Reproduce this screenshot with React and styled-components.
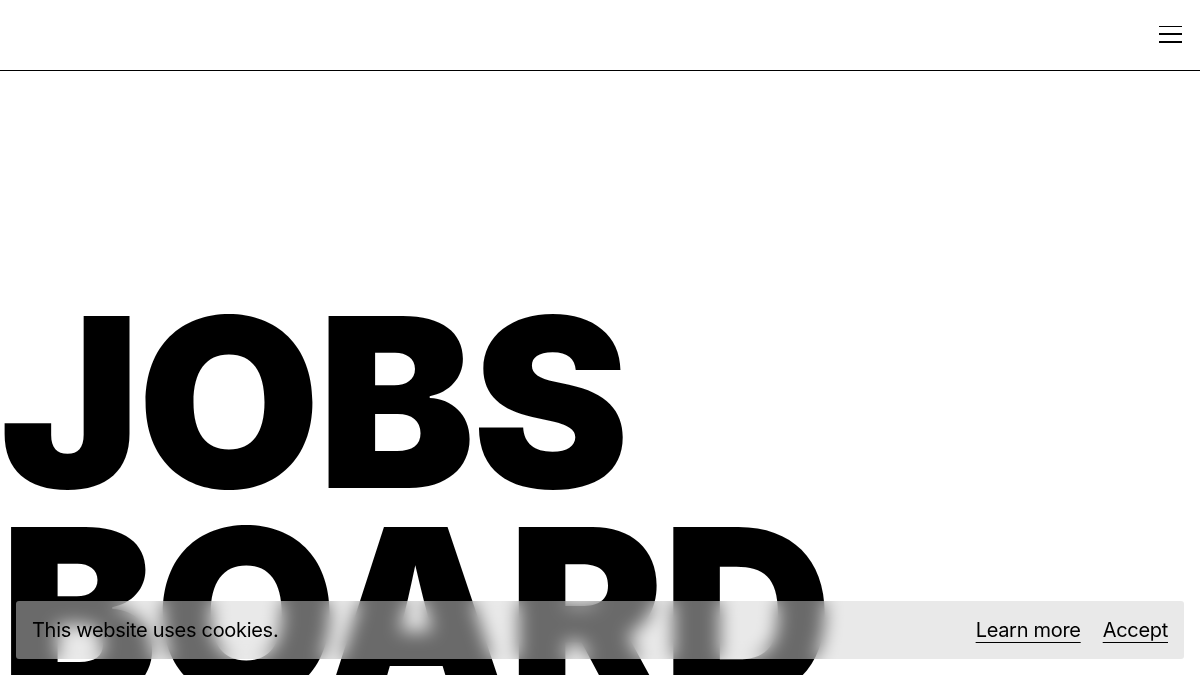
import React from "react";
import styled, { createGlobalStyle } from "styled-components";

const Global = createGlobalStyle`
  html, body { margin: 0; padding: 0; background: #fff; }
  body { font-family: Inter, "Liberation Sans", Arial, sans-serif; color: #000; overflow: hidden; }
  * { box-sizing: border-box; }
`;

const Page = styled.div`
  min-height: 675px;
  display: flex;
  flex-direction: column;
`;

const Header = styled.header`
  height: 71px;
  border-bottom: 1px solid #000;
  display: flex;
  align-items: center;
  justify-content: flex-end;
  padding: 0 18px 0 0;
`;

const MenuButton = styled.button`
  width: 23px;
  height: 17px;
  padding: 0;
  border: 0;
  background: transparent;
  display: flex;
  flex-direction: column;
  justify-content: space-between;
  cursor: pointer;
  margin-top: -2px;
`;

const MenuLine = styled.span`
  display: block;
  height: 1.5px;
  width: 100%;
  background: #000;
`;

const Hero = styled.main`
  padding-top: 226px;
`;

const Title = styled.h1`
  margin: 0;
  font-family: Inter, "Liberation Sans", Arial, sans-serif;
  font-weight: 900;
  font-size: 236px;
  line-height: 211px;
  letter-spacing: -3px;
  text-transform: uppercase;
`;

const Line = styled.span`
  display: block;
  white-space: nowrap;
`;

const CookieBar = styled.div`
  position: fixed;
  left: 16px;
  right: 16px;
  bottom: 16px;
  height: 58px;
  border-radius: 3px;
  background: rgba(212, 212, 212, 0.5);
  backdrop-filter: blur(9px);
  -webkit-backdrop-filter: blur(9px);
  display: flex;
  align-items: center;
  justify-content: space-between;
  padding: 0 16px;
  font-size: 20px;
  letter-spacing: -0.3px;
`;

const CookieText = styled.p`
  margin: 0;
  font-size: 20px;
`;

const Actions = styled.div`
  display: flex;
  gap: 22px;
`;

const TextLink = styled.a`
  color: #000;
  text-decoration: underline;
  text-underline-offset: 5px;
  text-decoration-thickness: 1px;
  cursor: pointer;
`;

export default function App() {
  return (
    <Page>
      <Global />
      <Header>
        <MenuButton aria-label="Menu">
          <MenuLine />
          <MenuLine />
          <MenuLine />
        </MenuButton>
      </Header>
      <Hero>
        <Title>
          <Line>Jobs</Line>
          <Line>Board</Line>
        </Title>
      </Hero>
      <CookieBar>
        <CookieText>This website uses cookies.</CookieText>
        <Actions>
          <TextLink>Learn more</TextLink>
          <TextLink>Accept</TextLink>
        </Actions>
      </CookieBar>
    </Page>
  );
}
